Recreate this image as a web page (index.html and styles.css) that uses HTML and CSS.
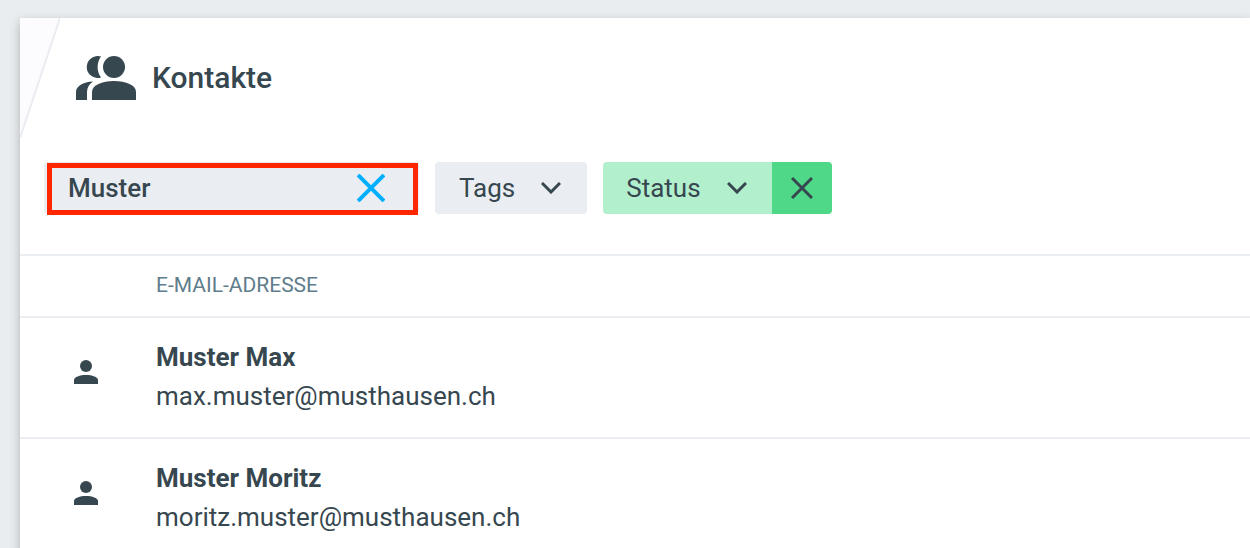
FILE: index.html
```html
<!DOCTYPE html>
<html lang="de">
<head>
    <meta charset="UTF-8">
    <meta name="viewport" content="width=device-width, initial-scale=1.0">
    <title>Kontakte</title>
    <link rel="stylesheet" href="styles.css">
</head>
<body>
    <main class="panel">
        <svg class="corner" viewBox="0 0 40 120" aria-hidden="true">
            <path d="M0 0H40L0 120Z" fill="#fcfcfe"/>
            <path d="M40 0L0 120" stroke="#e9ecf0" stroke-width="2"/>
        </svg>

        <header class="panel-header">
            <svg class="header-icon" viewBox="0 0 60 44" aria-hidden="true">
                <circle cx="38" cy="11" r="11"/>
                <path d="M16 44V36C16 29 26 25 38 25S60 29 60 36V44Z"/>
                <path d="M25 0.500A11 11 0 1 0 25 21.500A18 18 0 0 1 25 0.500Z"/>
                <path d="M0 44V36C0 30 7 26 17 25.500C13 28 11 32 11 36V44Z"/>
            </svg>
            <h1>Kontakte</h1>
        </header>

        <div class="filters">
            <div class="search">
                <input class="search-input" type="text" value="Muster" aria-label="Suche">
                <button class="search-clear" type="button" aria-label="Suche leeren">
                    <svg width="28" height="28" viewBox="0 0 28 28"><path d="M1 1L27 27M27 1L1 27"/></svg>
                </button>
                <span class="highlight"></span>
            </div>
            <button class="filter" type="button">
                Tags
                <svg class="chevron" viewBox="0 0 20 12" aria-hidden="true"><path d="M1 1L10 10L19 1"/></svg>
            </button>
            <div class="filter-group">
                <button class="filter filter-active" type="button">
                    Status
                    <svg class="chevron" viewBox="0 0 20 12" aria-hidden="true"><path d="M1 1L10 10L19 1"/></svg>
                </button>
                <button class="filter-remove" type="button" aria-label="Statusfilter entfernen">
                    <svg width="22" height="22" viewBox="0 0 22 22"><path d="M1 1L21 21M21 1L1 21"/></svg>
                </button>
            </div>
        </div>

        <table class="contacts">
            <thead>
                <tr>
                    <th class="icon-cell"></th>
                    <th>E-MAIL-ADRESSE</th>
                </tr>
            </thead>
            <tbody>
                <tr>
                    <td class="icon-cell">
                        <svg class="person" viewBox="0 0 24 24" aria-hidden="true"><circle cx="12" cy="6" r="6"/><path d="M0 24V20C0 17 6 15 12 15S24 17 24 20V24Z"/></svg>
                    </td>
                    <td>
                        <div class="name">Muster Max</div>
                        <div>max.muster@musthausen.ch</div>
                    </td>
                </tr>
                <tr>
                    <td class="icon-cell">
                        <svg class="person" viewBox="0 0 24 24" aria-hidden="true"><circle cx="12" cy="6" r="6"/><path d="M0 24V20C0 17 6 15 12 15S24 17 24 20V24Z"/></svg>
                    </td>
                    <td>
                        <div class="name">Muster Moritz</div>
                        <div>moritz.muster@musthausen.ch</div>
                    </td>
                </tr>
            </tbody>
        </table>
    </main>
</body>
</html>
```
FILE: styles.css
```css
* {
    box-sizing: border-box;
}

body {
    margin: 0;
    padding: 18px 0 0 20px;
    background: #e9edf0;
    color: #37474f;
    font-family: Roboto, sans-serif;
    font-size: 26px;
}

.panel {
    position: relative;
    background: #fff;
    box-shadow: 0 4px 10px rgba(0, 0, 0, 0.25);
}

.corner {
    position: absolute;
    top: 0;
    left: 0;
    width: 40px;
    height: 120px;
}

.panel-header {
    display: flex;
    align-items: center;
    gap: 16px;
    height: 120px;
    padding: 0 56px;
}

.header-icon {
    width: 60px;
    height: 44px;
    fill: #37474f;
}

h1 {
    margin: 0;
    font-size: 30px;
    font-weight: 500;
    line-height: 34px;
}

.filters {
    display: flex;
    gap: 16px;
    padding: 24px 24px 40px;
}

button {
    border: none;
    color: inherit;
    font: inherit;
    cursor: pointer;
}

button svg {
    display: block;
    fill: none;
    stroke: #37474f;
    stroke-width: 3px;
}

.search {
    position: relative;
    display: flex;
    align-items: center;
    width: 375px;
    height: 52px;
    background: #eaeef2;
    border-radius: 4px;
}

.search-input {
    flex: 1;
    min-width: 0;
    height: 100%;
    padding: 0 0 0 24px;
    border: none;
    outline: none;
    background: none;
    color: inherit;
    font: inherit;
    font-weight: 500;
}

.search-clear {
    padding: 0 34px 0 12px;
    background: none;
}

.search-clear svg {
    stroke: #00b0ff;
    stroke-width: 4px;
}

/* frame drawn over the search box */
.highlight {
    position: absolute;
    inset: 1px 1px -1px 3px;
    border: 5px solid #ff2600;
    pointer-events: none;
}

.filter {
    display: flex;
    align-items: center;
    gap: 26px;
    height: 52px;
    padding: 0 26px 0 24px;
    background: #eaeef2;
    border-radius: 4px;
}

.chevron {
    width: 20px;
    height: 12px;
}

.filter-group {
    display: flex;
    border-radius: 4px;
    overflow: hidden;
}

.filter-active {
    padding: 0 25px 0 23px;
    background: #b2efcd;
    border-radius: 0;
}

.filter-remove {
    display: flex;
    align-items: center;
    justify-content: center;
    width: 60px;
    padding: 0;
    background: #4ed887;
}

.contacts {
    width: 100%;
    border-spacing: 0;
    line-height: 39px;
}

th,
td {
    padding: 20px 24px 21px 0;
    border-top: 2px solid #eaeef2;
    text-align: left;
}

th {
    height: 62px;
    padding: 0 0 1px;
    color: #607d8b;
    font-size: 21px;
    font-weight: 400;
}

.icon-cell {
    width: 136px;
    padding-left: 54px;
}

.person {
    display: block;
    width: 24px;
    height: 24px;
    margin-bottom: 11px;
    fill: #37474f;
}

.name {
    font-weight: 700;
}
```
